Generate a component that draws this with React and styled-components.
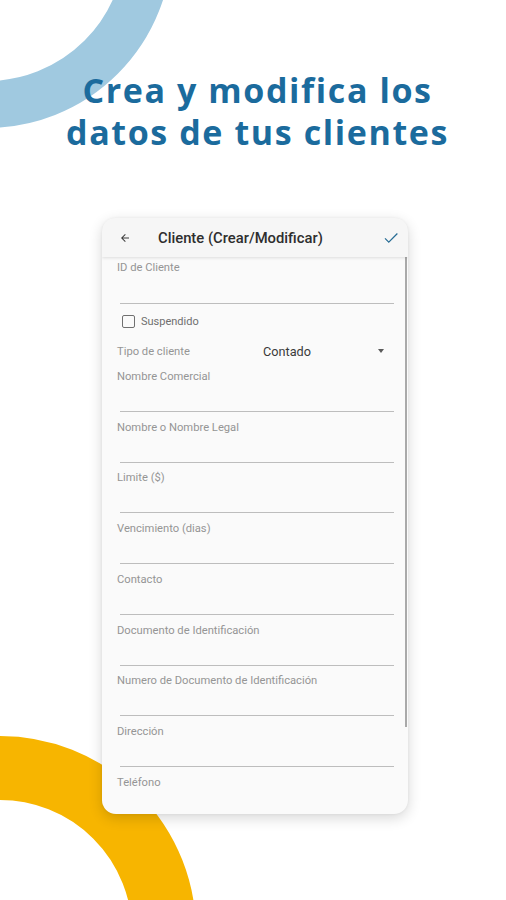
import React from 'react';
import styled, { createGlobalStyle } from 'styled-components';

const GlobalStyle = createGlobalStyle`
  html, body {
    margin: 0;
    padding: 0;
    background: #ffffff;
  }
  * {
    box-sizing: border-box;
  }
`;

const Page = styled.div`
  position: relative;
  width: 506px;
  height: 900px;
  overflow: hidden;
  background: #ffffff;
  font-family: Roboto, "Noto Sans", sans-serif;
`;

// decorative rings behind the content
const Ring = styled.div`
  position: absolute;
  left: ${p => p.$left}px;
  top: ${p => p.$top}px;
  width: ${p => p.$size}px;
  height: ${p => p.$size}px;
  border: ${p => p.$band}px solid ${p => p.$color};
  border-radius: 50%;
  z-index: 0;
`;

const Content = styled.div`
  position: relative;
  z-index: 1;
  display: flex;
  flex-direction: column;
`;

const Headline = styled.h1`
  margin: 0;
  padding: 69px 0 0 9px;
  text-align: center;
  font-family: "Open Sans", sans-serif;
  font-weight: 700;
  font-size: 34px;
  line-height: 42px;
  letter-spacing: 1.6px;
  color: #1b6b9d;
`;

const Phone = styled.div`
  position: relative;
  width: 306px;
  height: 596px;
  margin: 65px 0 0 102px;
  border-radius: 14px;
  background: #fafafa;
  overflow: hidden;
  box-shadow: 0 4px 14px rgba(0, 0, 0, 0.16), 0 0 3px rgba(0, 0, 0, 0.06);
`;

const AppBar = styled.div`
  position: relative;
  z-index: 2;
  height: 39px;
  display: flex;
  align-items: center;
  padding: 0 8px 0 17px;
  background: #f6f6f6;
  box-shadow: 0 1px 3px rgba(0, 0, 0, 0.12);
`;

const AppTitle = styled.div`
  flex: 1;
  margin-left: 27px;
  font-size: 14.8px;
  font-weight: 500;
  color: #2e2e2e;
`;

const IconBox = styled.div`
  display: flex;
  align-items: center;
`;

const Form = styled.div`
  position: relative;
  padding: 4px 14px 0 15px;
`;

const ScrollThumb = styled.div`
  position: absolute;
  top: 0;
  right: 1px;
  width: 2px;
  height: 470px;
  background: #a9a9a9;
`;

const Field = styled.div`
  display: flex;
  flex-direction: column;
  padding-top: ${p => p.$top ?? 8.75}px;
`;

const Label = styled.div`
  height: 13px;
  font-size: 11.2px;
  line-height: 13px;
  color: #959595;
  white-space: nowrap;
`;

const Input = styled.div`
  height: ${p => p.$h ?? 29}px;
  margin-left: 3px;
  border-bottom: 1px solid #bdbdbd;
`;

const CheckRow = styled.label`
  display: flex;
  align-items: center;
  height: 14px;
  margin-top: 10px;
  padding-left: 5px;
  gap: 6px;
  font-size: 11px;
  color: #6f6f6f;
`;

const Box = styled.span`
  width: 13px;
  height: 13px;
  border: 1.5px solid #707070;
  border-radius: 2px;
`;

const SelectRow = styled.div`
  display: grid;
  grid-template-columns: 146px 1fr auto;
  align-items: center;
  height: 20px;
  margin-top: 13px;
`;

const SelectValue = styled.div`
  font-size: 12.7px;
  color: #3a3a3a;
`;

const Caret = styled.span`
  width: 0;
  height: 0;
  margin-right: 10px;
  border-left: 3.5px solid transparent;
  border-right: 3.5px solid transparent;
  border-top: 4px solid #5a5a5a;
`;

const fields = [
  'Nombre Comercial',
  'Nombre o Nombre Legal',
  'Limite ($)',
  'Vencimiento (dias)',
  'Contacto',
  'Documento de Identificación',
  'Numero de Documento de Identificación',
  'Dirección',
  'Teléfono',
];

export default function App() {
  return (
    <>
      <GlobalStyle />
      <Page>
        <Ring $left={-198} $top={-242} $size={370} $band={47} $color="#a0c9e0" />
        <Ring $left={-196} $top={736} $size={392} $band={64} $color="#f7b500" />
        <Content>
          <Headline>
            Crea y modifica los<br />datos de tus clientes
          </Headline>
          <Phone>
            <AppBar>
              <IconBox>
                <svg width="12" height="12" viewBox="0 0 24 24">
                  <path d="M20 11H7.83l5.59-5.59L12 4l-8 8 8 8 1.41-1.41L7.83 13H20v-2z" fill="#3c3c3c" />
                </svg>
              </IconBox>
              <AppTitle>Cliente (Crear/Modificar)</AppTitle>
              <IconBox>
                <svg width="18" height="18" viewBox="0 0 24 24">
                  <path d="M4 12.5l5 5L20.5 6" fill="none" stroke="#2b6f96" strokeWidth="1.7" />
                </svg>
              </IconBox>
            </AppBar>
            <Form>
              <ScrollThumb />
              <Field $top={0}>
                <Label>ID de Cliente</Label>
                <Input $h={30} />
              </Field>
              <CheckRow>
                <Box />
                Suspendido
              </CheckRow>
              <SelectRow>
                <Label>Tipo de cliente</Label>
                <SelectValue>Contado</SelectValue>
                <Caret />
              </SelectRow>
              {fields.map(f => (
                <Field key={f}>
                  <Label>{f}</Label>
                  <Input />
                </Field>
              ))}
            </Form>
          </Phone>
        </Content>
      </Page>
    </>
  );
}
